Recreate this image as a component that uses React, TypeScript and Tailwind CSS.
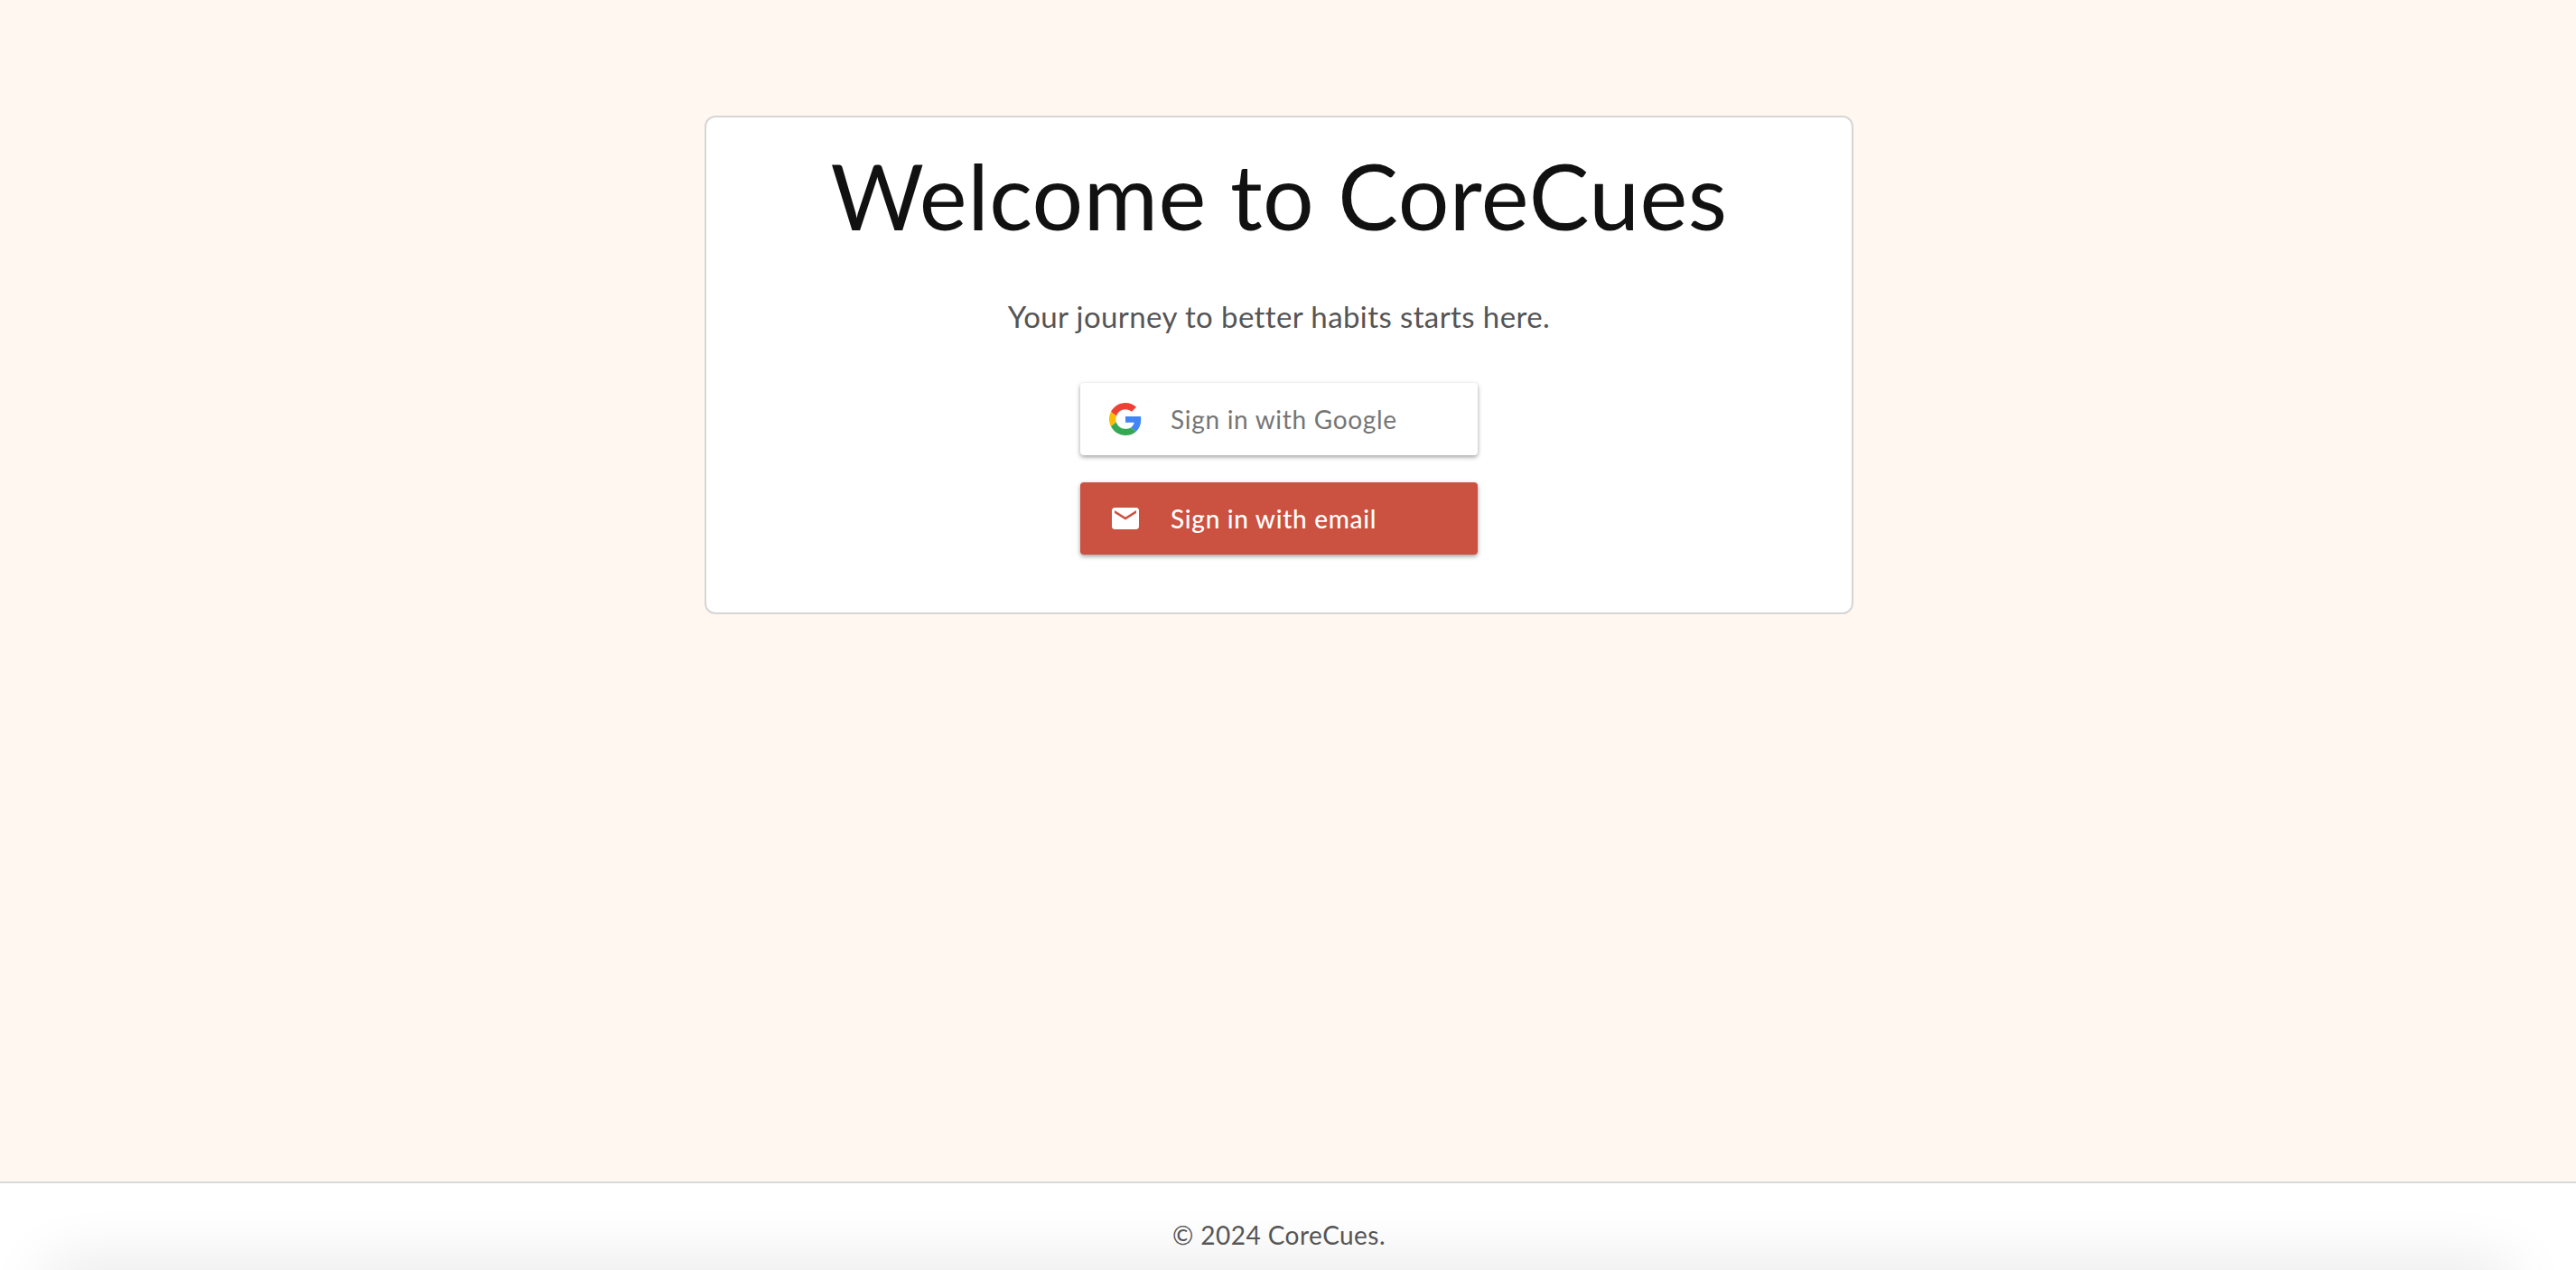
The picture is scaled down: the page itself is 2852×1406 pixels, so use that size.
const fontStack = "font-['Lato','Noto_Sans',sans-serif]";

const GoogleIcon = () => (
  <svg viewBox="0 0 48 48" className="w-9 h-9 shrink-0">
    <path fill="#EA4335" d="M24 9.5c3.54 0 6.71 1.22 9.21 3.6l6.85-6.85C35.9 2.38 30.47 0 24 0 14.62 0 6.51 5.38 2.56 13.22l7.98 6.19C12.43 13.72 17.74 9.5 24 9.5z" />
    <path fill="#4285F4" d="M46.98 24.55c0-1.57-.15-3.09-.38-4.55H24v9.02h12.94c-.58 2.96-2.26 5.48-4.78 7.18l7.73 6c4.51-4.18 7.09-10.36 7.09-17.65z" />
    <path fill="#FBBC05" d="M10.53 28.59c-.48-1.45-.76-2.99-.76-4.59s.27-3.14.76-4.59l-7.98-6.19C.92 16.46 0 20.12 0 24c0 3.88.92 7.54 2.56 10.78l7.97-6.19z" />
    <path fill="#34A853" d="M24 48c6.48 0 11.93-2.13 15.89-5.81l-7.73-6c-2.15 1.45-4.92 2.3-8.16 2.3-6.26 0-11.57-4.22-13.47-9.91l-7.98 6.19C6.51 42.62 14.62 48 24 48z" />
  </svg>
);

const MailIcon = () => (
  <svg viewBox="0 0 24 24" className="w-9 h-9 shrink-0" fill="#fff">
    <path d="M20 4H4c-1.1 0-1.99.9-1.99 2L2 18c0 1.1.9 2 2 2h16c1.1 0 2-.9 2-2V6c0-1.1-.9-2-2-2zm0 4l-8 5-8-5V6l8 5 8-5v2z" />
  </svg>
);

export default function App() {
  return (
    <div className={`min-h-[1406px] flex flex-col bg-white ${fontStack}`}>
      <main className="flex-1 bg-[#fff7f0] pt-[128px] pr-[20px]">
        <div className="w-[1272px] h-[552px] mx-auto bg-white border-2 border-[#d6d6d6] rounded-xl flex flex-col items-center">
          <h1 className="mt-[21px] text-[100px] leading-[130px] text-[#111111] tracking-[0.5px]">
            Welcome to CoreCues
          </h1>
          <p className="mt-[47px] text-[33px] leading-[44px] text-[#555555] tracking-[0.4px]">
            Your journey to better habits starts here.
          </p>
          <div className="mt-[52px] flex flex-col gap-[30px]">
            <button className="w-[440px] h-[80px] bg-white rounded-[4px] shadow-[0_2px_5px_rgba(0,0,0,0.38)] flex items-center pl-[32px] gap-[32px] text-[28px] tracking-[0.7px] text-[#757575]">
              <GoogleIcon />
              Sign in with Google
            </button>
            <button className="w-[440px] h-[80px] bg-[#cb5140] rounded-[4px] shadow-[0_2px_5px_rgba(0,0,0,0.38)] flex items-center pl-[32px] gap-[32px] text-[28px] tracking-[0.7px] font-medium text-white">
              <MailIcon />
              Sign in with email
            </button>
          </div>
        </div>
      </main>
      <footer className="relative overflow-hidden h-[98px] border-t-2 border-[#d9d9d9] bg-white flex items-center justify-center pt-[18px] pr-[20px]">
        <div className="absolute left-[50px] right-[70px] top-full h-[40px] rounded-[40px] shadow-[0_0_70px_rgba(0,0,0,0.14)]" />
        <span className="relative text-[28px] tracking-[0.45px] text-[#555555]">© 2024 CoreCues.</span>
      </footer>
    </div>
  );
}
